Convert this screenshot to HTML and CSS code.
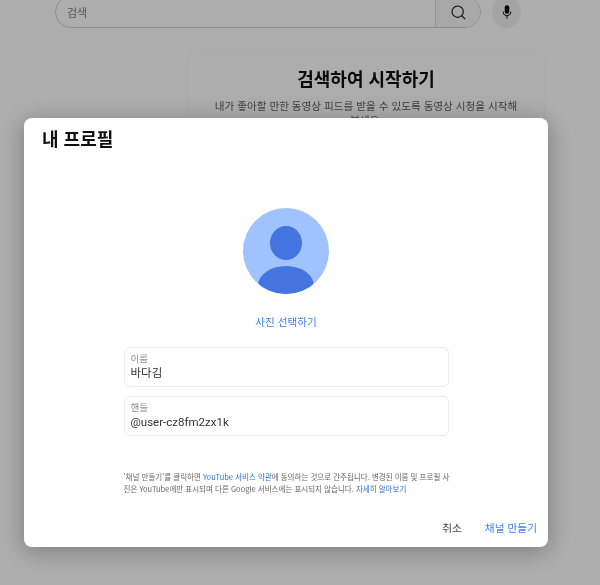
FILE: index.html
```html
<!DOCTYPE html>
<html lang="ko">
<head>
<meta charset="utf-8">
<title>내 프로필</title>
<link rel="stylesheet" href="styles.css">
</head>
<body>
<div class="page">
  <header class="topbar">
    <div class="search">
      <div class="search-input">검색</div>
      <div class="search-btn">
        <svg width="15" height="15" viewBox="0 0 18 18" fill="none" stroke="#0f0f0f" stroke-width="1.3"><circle cx="8" cy="8" r="6.8"/><path d="M12.8 12.8 17 17"/></svg>
      </div>
    </div>
    <div class="mic">
      <svg width="12" height="16" viewBox="0 0 14 18"><rect x="4.3" y="1" width="5.4" height="10" rx="2.7" fill="#0f0f0f"/><path d="M2.5 8.5a4.5 4.8 0 0 0 9 0M7 13.5V17" fill="none" stroke="#0f0f0f" stroke-width="1.2"/></svg>
    </div>
  </header>
  <main class="feed">
    <section class="start-card">
      <h2 class="start-title">검색하여 시작하기</h2>
      <p class="start-text">내가 좋아할 만한 동영상 피드를 받을 수 있도록 동영상 시청을 시작해 보세요.</p>
    </section>
  </main>
</div>
<div class="scrim"></div>
<div class="dialog">
  <h1 class="dialog-title">내 프로필</h1>
  <div class="dialog-body">
    <svg class="avatar" width="86" height="86" viewBox="0 0 86 86">
      <defs><clipPath id="av"><circle cx="43" cy="43" r="43"/></clipPath></defs>
      <g clip-path="url(#av)">
        <rect width="86" height="86" fill="#a0c3ff"/>
        <ellipse cx="43" cy="35" rx="16" ry="17" fill="#4374e0"/>
        <ellipse cx="43" cy="78" rx="28" ry="20" fill="#4374e0"/>
      </g>
    </svg>
    <a class="pick-photo">사진 선택하기</a>
    <div class="fields">
      <div class="field">
        <div class="field-label">이름</div>
        <div class="field-value">바다김</div>
      </div>
      <div class="field">
        <div class="field-label">핸들</div>
        <div class="field-value">@user-cz8fm2zx1k</div>
      </div>
    </div>
    <p class="legal">'채널 만들기'를 클릭하면 <a class="link-dark">YouTube 서비스 약관</a>에 동의하는 것으로 간주됩니다. 변경된 이름 및 프로필 사진은 YouTube에만 표시되며 다른 Google 서비스에는 표시되지 않습니다. <a class="link-dark">자세히 알아보기</a></p>
  </div>
  <footer class="actions">
    <button class="btn btn-cancel">취소</button>
    <button class="btn btn-create">채널 만들기</button>
  </footer>
</div>
</body>
</html>
```
FILE: styles.css
```css
* { box-sizing: border-box; }
html, body { margin: 0; height: 100%; }
body {
  position: relative;
  width: 600px;
  height: 585px;
  overflow: hidden;
  background: #fff;
  font-family: "Noto Sans CJK KR", Roboto, "Noto Sans", sans-serif;
  color: #0f0f0f;
  filter: blur(0.45px);
}
.page { height: 100%; padding-left: 55px; }
.topbar { display: flex; align-items: center; gap: 11px; height: 32px; margin-top: -4px; }
.search {
  width: 426px;
  height: 32px;
  display: flex;
  border: 1px solid #d2d2d2;
  border-radius: 16px;
  overflow: hidden;
}
.search-input { flex: 1; padding-left: 11px; font-size: 11px; line-height: 30px; color: #808080; }
.search-btn {
  width: 45px;
  display: flex;
  align-items: center;
  justify-content: center;
  background: #f8f8f8;
  border-left: 1px solid #d8d8d8;
}
.mic {
  width: 29px;
  height: 32px;
  border-radius: 50%;
  background: #f2f2f2;
  display: flex;
  align-items: center;
  justify-content: center;
}
.feed { padding: 24px 0 0 133px; }
.start-card {
  width: 356px;
  height: 120px;
  padding-top: 13px;
  border-radius: 10px;
  text-align: center;
  background: #fff;
  box-shadow: 0 0 6px rgba(0, 0, 0, .05);
}
.start-title { margin: 0; font-size: 18px; line-height: 26px; font-weight: 700; }
.start-text { margin: 8px 20px 0; font-size: 10.6px; line-height: 14px; color: #606060; word-break: keep-all; }
.scrim { position: absolute; inset: 0; background: rgba(0, 0, 0, .32); }
.dialog {
  position: absolute;
  left: 24px;
  top: 118px;
  width: 524px;
  height: 429px;
  display: flex;
  flex-direction: column;
  background: #fff;
  border-radius: 8px;
  box-shadow: 0 4px 24px rgba(0, 0, 0, .3);
}
.dialog-title { margin: 0; padding: 7px 0 0 18px; font-size: 18px; line-height: 26px; font-weight: 700; color: #0f0f0f; }
.dialog-body { flex: 1; display: flex; flex-direction: column; align-items: center; padding-top: 57px; }
.avatar { display: block; }
.pick-photo { margin-top: 20px; font-size: 10.6px; line-height: 15px; color: #3b82e6; }
.fields { width: 325px; margin-top: 18px; display: flex; flex-direction: column; gap: 9px; }
.field {
  height: 40px;
  padding: 4px 6px 0;
  border: 1px solid #ececec;
  border-radius: 6px;
}
.field-label { font-size: 9.5px; line-height: 13px; color: #8e8e8e; }
.field-value { margin-top: 1px; font-size: 11.5px; line-height: 15px; color: #333; font-family: Roboto, "Noto Sans CJK KR", sans-serif; }
.legal { width: 327px; margin: 35px 0 0 2px; font-size: 7.5px; line-height: 12px; color: #666; word-break: break-all; }
.link-dark { color: #2f74cf; }
.actions { display: flex; justify-content: flex-end; align-items: center; gap: 23px; padding: 0 11px 12px 0; }
.btn { border: 0; padding: 0; background: none; font: inherit; font-size: 10.7px; line-height: 15px; }
.btn-cancel { color: #444; }
.btn-create { color: #3b82e6; }
```
